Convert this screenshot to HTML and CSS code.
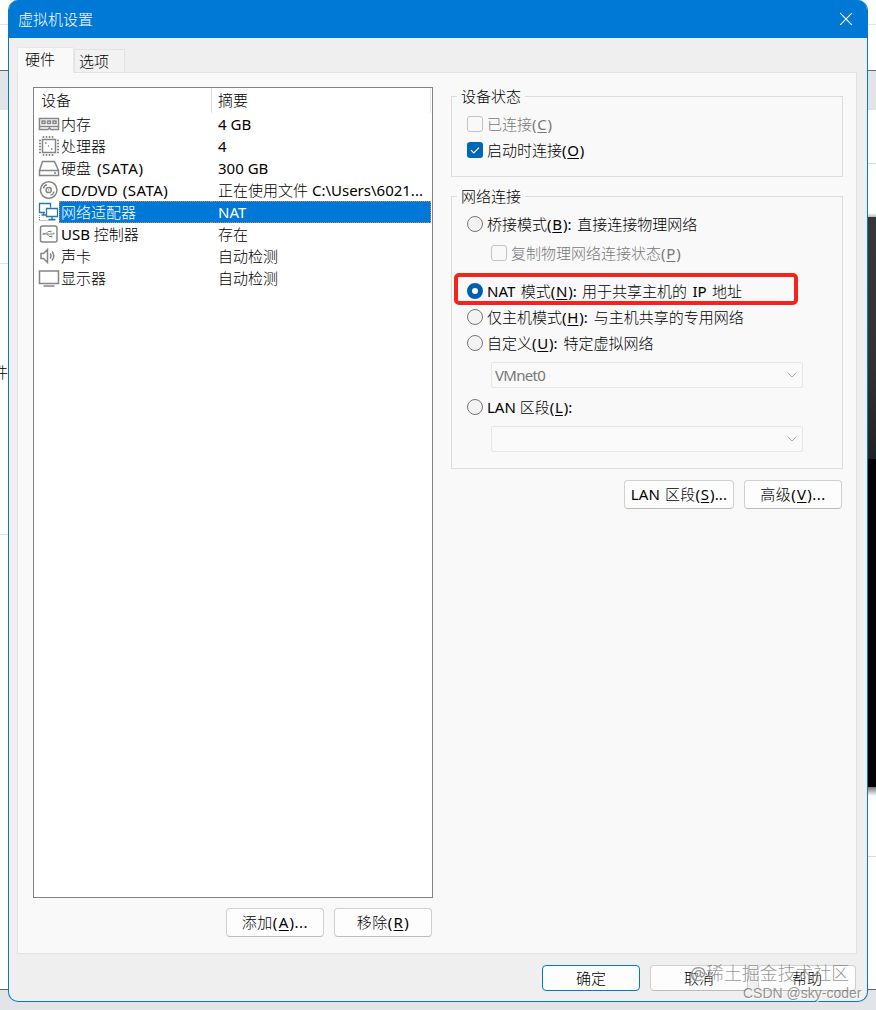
FILE: index.html
```html
<!DOCTYPE html>
<html lang="zh-CN">
<head>
<meta charset="utf-8">
<title>虚拟机设置</title>
<link rel="stylesheet" href="styles.css">
</head>
<body>
<div class="desktop">
  <div class="gutter gutter-left"><span class="peek">件</span></div>
  <main class="window">
    <header class="titlebar">
      <span>虚拟机设置</span>
      <svg class="close" width="14" height="14" viewBox="0 0 14 14"><path d="M1.2 1.2 12.8 12.8M12.8 1.2 1.2 12.8"/></svg>
    </header>
    <nav class="tabs">
      <div class="tab active">硬件</div>
      <div class="tab">选项</div>
    </nav>
    <section class="panel">
      <div class="left">
        <div class="list">
          <div class="row head"><span class="name">设备</span><span class="summary">摘要</span></div>
          <div class="row">
            <svg class="icon" width="22" height="22" viewBox="0 0 22 22"><path d="M1.5 5.500h19v11h-7.500l-1.500-1.500-1.500 1.500h-8.500zM1.500 13.500h19"/><path d="M4 8h3v2.500H4zM9.500 8h3v2.500h-3zM15 8h3v2.500h-3z"/></svg>
            <span class="name">内存</span><span class="summary">4 GB</span></div>
          <div class="row">
            <svg class="icon" width="22" height="22" viewBox="0 0 22 22"><path d="M4.500 4.500h13v13h-13z"/><path d="M5.500 1v2M8.500 1v2M11.500 1v2M14.500 1v2M5.500 19v2M8.500 19v2M11.500 19v2M14.500 19v2M1 5.500h2M1 8.500h2M1 11.500h2M1 14.500h2M1 17.500h2M19 5.500h2M19 8.500h2M19 11.500h2M19 14.500h2M19 17.500h2M7 8h1.500M13 14h1.500M10 11h1"/></svg>
            <span class="name">处理器</span><span class="summary">4</span></div>
          <div class="row">
            <svg class="icon" width="22" height="22" viewBox="0 0 22 22"><path d="M4.500 4.500h12l4 9v5h-19v-5zM1.500 13.500h19M16 16h2"/></svg>
            <span class="name">硬盘 <span class="bus drive">(SATA)</span></span><span class="summary">300 GB</span></div>
          <div class="row">
            <svg class="icon" width="22" height="22" viewBox="0 0 22 22"><circle cx="10.700" cy="11" r="8.300"/><circle cx="10.700" cy="11" r="2.600"/><path d="M5.500 9.500Q6 6.500 9 5.800M12.500 16.200Q15.500 15.500 16 12.500M10.200 11h1"/></svg>
            <span class="name">CD/DVD <span class="bus">(SATA)</span></span><span class="summary">正在使用文件 C:\Users\6021...</span></div>
          <div class="row selected">
            <svg class="icon net" width="22" height="22" viewBox="0 0 22 22"><path d="M7 11.500H1.500v-9h11v4M8.500 7.500h11v8h-11zM14 15.500v3M10.500 18.500h7M5.500 11.500v2.500M3.500 14h5"/><path class="dots" d="M1.500 14v5M1.500 19.500h16"/></svg>
            <span class="name">网络适配器</span><span class="summary">NAT</span></div>
          <div class="row">
            <svg class="icon" width="22" height="22" viewBox="0 0 22 22"><rect x="2.500" y="3" width="16.500" height="16" rx="2"/><path class="thin" d="M5 11h10M7.500 11l2.500-2.500h2.500M9 11l2 2.500h2.500"/><path d="M4.500 11h2M12 8.500h1.500M13 13.500h1.500M15 10.500h1.500"/></svg>
            <span class="name">USB 控制器</span><span class="summary">存在</span></div>
          <div class="row">
            <svg class="icon" width="22" height="22" viewBox="0 0 22 22"><path d="M3 8.500h2.500l4-4v13l-4-4H3zM12 8.500q2 2.500 0 5M14 6.500q3.500 4.500 0 9"/></svg>
            <span class="name">声卡</span><span class="summary">自动检测</span></div>
          <div class="row">
            <svg class="icon" width="22" height="22" viewBox="0 0 22 22"><path d="M1.500 4h19v12.500h-19zM5.500 19h11"/></svg>
            <span class="name">显示器</span><span class="summary">自动检测</span></div>
        </div>
        <div class="actions"><button class="btn">添加(<u>A</u>)...</button><button class="btn">移除(<u>R</u>)</button></div>
      </div>
      <div class="right">
        <fieldset class="group status">
          <legend>设备状态</legend>
          <label class="option disabled"><i class="check"></i><span>已连接(<u>C</u>)</span></label>
          <label class="option"><i class="check on"><svg width="16" height="16" viewBox="0 0 16 16"><path d="M4 8.200 6.800 11 12 5.700"/></svg></i><span>启动时连接(<u>O</u>)</span></label>
        </fieldset>
        <fieldset class="group network">
          <legend>网络连接</legend>
          <label class="option bridge"><i class="radio"></i><span>桥接模式(<u>B</u>): 直接连接物理网络</span></label>
          <label class="option disabled nested"><i class="check"></i><span>复制物理网络连接状态(<u>P</u>)</span></label>
          <label class="option nat"><i class="radio on"></i><span>NAT 模式(<u>N</u>): 用于共享主机的 IP 地址</span></label>
          <label class="option"><i class="radio"></i><span>仅主机模式(<u>H</u>): 与主机共享的专用网络</span></label>
          <label class="option"><i class="radio"></i><span>自定义(<u>U</u>): 特定虚拟网络</span></label>
          <div class="combo"><span class="value">VMnet0</span><svg width="10" height="6" viewBox="0 0 10 6"><path d="M.5.500 5 5 9.500.5"/></svg></div>
          <label class="option lan"><i class="radio"></i><span>LAN 区段(<u>L</u>):</span></label>
          <div class="combo"><span class="value"></span><svg width="10" height="6" viewBox="0 0 10 6"><path d="M.5.500 5 5 9.500.5"/></svg></div>
        </fieldset>
        <div class="actions more"><button class="btn wide">LAN 区段(<u>S</u>)...</button><button class="btn">高级(<u>V</u>)...</button></div>
      </div>
    </section>
    <footer class="footer"><button class="btn primary">确定</button><button class="btn">取消</button><button class="btn">帮助</button></footer>
  </main>
  <div class="gutter gutter-right"></div>
  <div class="highlight"></div>
  <div class="mark mark-community">@稀土掘金技术社区</div>
  <div class="mark mark-author">CSDN @sky-coder</div>
</div>
</body>
</html>
```
FILE: styles.css
```css
* { box-sizing: border-box; }
body {
  margin: 0;
  font: 400 15px/22px "Noto Sans", "Noto Sans CJK SC Light", "Noto Sans CJK SC", sans-serif;
  color: #000;
}
.desktop {
  position: relative;
  display: grid;
  grid-template-columns: 8px 860px 8px;
  height: 1010px;
  overflow: hidden;
  background: linear-gradient(#fff 990px, #e2e4e8 990px);
}
.gutter-left {
  padding-top: 361px;
  overflow: hidden;
  background: linear-gradient(#fff 24px, #e1e4e6 24px 25px, #fff 25px 70px, #66696c 70px 71px, #e1e5e7 71px 110px, #fff 110px 263px, #e1e4e6 263px 264px, #fff 264px 534px, #e1e4e6 534px 535px, #fff 535px 989px, #666 989px 990px, #e1e5e8 990px);
}
.peek { display: block; margin-left: -7px; }
.gutter-right {
  background: linear-gradient(#fff 24px, #e1e4e6 24px 25px, #fff 25px 70px, #66696c 70px 71px, #e1e4e8 71px 110px, #fff 110px 163px, #d9dce0 163px 164px, #fff 164px 213px, #bbb 217px, #363738 217px, #303132 370px, #202223 459px, #000 459px 787px, #777 787px, #fff 796px 856px, #d9d9e0 856px 857px, #fff 857px 989px, #666 989px 990px, #e1e4e8 990px);
}
.window {
  display: flex;
  flex-direction: column;
  height: 1002px;
  border: 1px solid #0879bd;
  border-top: 0;
  border-radius: 10px;
  overflow: hidden;
  background: #efefef;
}
.titlebar {
  display: flex;
  flex: 0 0 38px;
  align-items: center;
  justify-content: space-between;
  padding: 0 14px 0 9px;
  background: #0078d6;
  color: #fff;
}
.close { fill: none; stroke: #fff; stroke-width: 1.2; }
.tabs {
  display: flex;
  flex: 0 0 34px;
  align-items: flex-end;
  padding-left: 8px;
}
.tab {
  width: 51px;
  height: 23px;
  padding-left: 4px;
  border: 1px solid #e2e2e2;
  border-bottom: 0;
  background: #f2f2f2;
}
.tab.active {
  z-index: 1;
  width: 57px;
  height: 26px;
  margin-bottom: -1px;
  padding-left: 7px;
  border-color: #e8e8e8;
  background: #f9f9f9;
}
.panel {
  display: flex;
  gap: 18px;
  height: 882px;
  margin: 0 10px 0 8px;
  padding: 14px 13px 0 15px;
  border: 1px solid #e2e2e2;
  background: #f9f9f9;
}
.list {
  width: 400px;
  height: 811px;
  padding-right: 1px;
  border: 1px solid #7f8286;
  background: #fff;
}
.row { display: flex; height: 22px; white-space: nowrap; }
.row .icon { flex: none; margin: 0 -1px 0 4px; }
.name { width: 152px; padding-left: 2px; }
.summary { flex: 1; padding-left: 7px; }
.row.head { height: 25px; padding: 1px 0 0 5px; background: linear-gradient(#e2e2e2, #e2e2e2) 177px 0 / 1px 100% no-repeat; border-right: 1px solid #e8e8e8; }
.head .name { width: 172px; }
.bus { margin-left: 1px; letter-spacing: .5px; }
.bus.drive { margin-left: 2px; letter-spacing: .7px; }
.selected .name, .selected .summary { background: #0078d7; color: #fff; line-height: 20px; border: dotted #d08b46; border-width: 1px 0; }
.selected .name { padding-left: 1px; border-left-width: 1px; }
.selected .summary { border-right-width: 1px; }
.icon { fill: none; stroke: #858585; stroke-width: 1.5; }
.icon.net { stroke: #2c78aa; stroke-width: 1.3; }
.icon .thin { stroke-width: 1; }
.icon .dots { stroke: #888; stroke-width: 1; stroke-dasharray: 1 1; }
.actions { display: flex; justify-content: flex-end; gap: 10px; margin-top: 10px; }
.left .actions { padding-right: 1px; }
.btn {
  width: 98px;
  height: 29px;
  padding: 0 0 1px;
  border: 1px solid #d0d0d0;
  border-bottom-color: #bcbcbc;
  border-radius: 4px;
  background: #fdfdfd;
  font: inherit;
  line-height: 20px;
  letter-spacing: .5px;
  color: #000;
  white-space: nowrap;
}
.btn.wide { width: 110px; letter-spacing: .15px; word-spacing: 1px; }
.right { width: 392px; padding-top: 9px; }
.group {
  display: flow-root;
  position: relative;
  margin: 0;
  padding: 0 0 0 15px;
  border: 1px solid #dcdcdc;
}
legend {
  position: absolute;
  top: -12px;
  left: 5px;
  padding: 0 4px;
  background: #f9f9f9;
}
.status { height: 81px; padding-top: 14px; }
.network { height: 273px; margin-top: 19px; padding-top: 14px; }
.option { display: flex; align-items: center; gap: 4px; height: 26px; white-space: nowrap; word-spacing: 2px; }
.option.nat { word-spacing: 1.5px; }
.option.lan { word-spacing: 0; }
.disabled { color: #777; }
.nested { margin: 3px 0 12px 24px; }
.check, .radio { flex: none; width: 16px; height: 16px; border: 1px solid #777; }
.check { border-color: #c3c3c3; border-radius: 3px; }
.check.on { border: 0; background: #0067b8; }
.check svg { display: block; fill: none; stroke: #fff; stroke-width: 1.1; }
.radio { border-radius: 50%; background: #f3f3f3; }
.radio.on { border: 5px solid #005fb4; background: #fff; }
.combo {
  display: flex;
  align-items: center;
  justify-content: space-between;
  width: 312px;
  height: 26px;
  margin: 6px 0 6px 24px;
  padding: 0 5px 0 3px;
  border: 1px solid #e6e6e6;
  border-radius: 2px;
  background: #fafafa;
  color: #777;
}
.value { letter-spacing: -.7px; }
.combo svg { fill: none; stroke: #aaa; }
.more { margin-top: 11px; padding-right: 1px; }
u { margin: 0 .8px; text-decoration-thickness: 1px; text-underline-offset: 2px; }
.footer { display: flex; justify-content: flex-end; gap: 10px; padding: 11px 11px 0 0; }
.footer .btn { height: 26px; letter-spacing: 0; }
.btn.primary { border-color: #0078d4; }
.highlight {
  position: absolute;
  left: 454px;
  top: 273px;
  width: 344px;
  height: 32px;
  border: 4px solid #f5241b;
  border-radius: 5px;
}
.mark { position: absolute; color: rgba(90, 90, 90, .65); white-space: nowrap; text-shadow: 1px 1px 0 rgba(255, 255, 255, .7); }
.mark-community { left: 690px; top: 962px; font-size: 17.900px; }
.mark-author { left: 743px; top: 982px; font: 14px/22px "Liberation Sans", sans-serif; }
```
